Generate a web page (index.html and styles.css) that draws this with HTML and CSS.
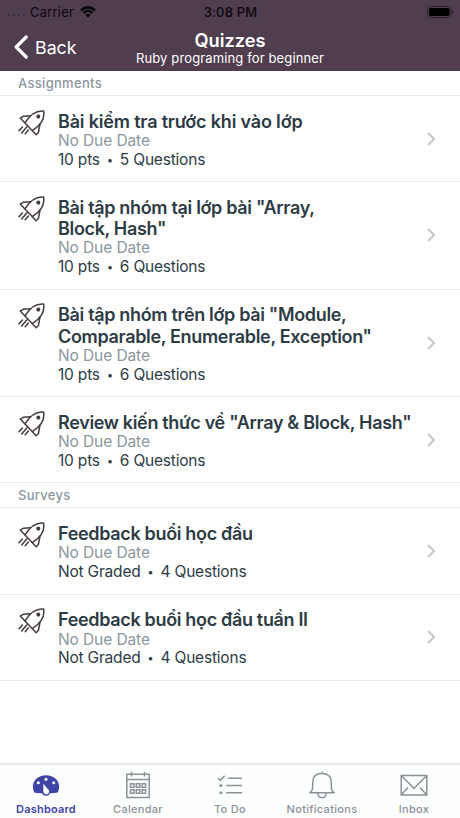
FILE: index.html
```html
<!DOCTYPE html>
<html lang="vi">
<head>
  <meta charset="UTF-8" />
  <title>Quizzes</title>
  <link rel="stylesheet" href="styles.css">
</head>
<body>
  <svg class="defs">
    <symbol id="rocket" viewBox="0 0 28 28">
      <path d="M7 12.8C11.5 5.5 17 .3 25.6 1.1C27.2 10 22.5 15.5 14.6 20.4" />
      <path d="M12.6 5.8L5.2 6.3L2.2 8.1L18.2 24.7L20.4 22.5L22 14.2M1 20.8L4.4 17M3.7 22.9L8.7 17M7.2 23.7L10.3 20" />
      <circle cx="20.3" cy="6.6" r="1.3" fill="currentColor" />
    </symbol>
    <symbol id="chevron" viewBox="0 0 10 16">
      <path d="M2 2L8 8L2 14" />
    </symbol>
  </svg>

  <header class="header">
    <div class="status">
      <div class="carrier">
        <span class="dots"><i></i><i></i><i></i><i></i></span>
        <span>Carrier</span>
        <svg class="wifi" viewBox="0 0 16 12">
          <path d="M1 4.3Q8-1.8 15 4.3M3.4 6.9Q8 3 12.6 6.9" fill="none" stroke="#000" stroke-width="2.2" />
          <path d="M5.3 8.7Q8 6.6 10.7 8.7L8 11.7Z" />
        </svg>
      </div>
      <div class="time">3:08 PM</div>
      <svg class="battery" viewBox="0 0 28 12">
        <rect x=".5" y=".5" width="23.5" height="11" rx="2.8" fill="none" stroke="#2c222d" />
        <rect x="2" y="2" width="20.5" height="8" rx="1.5" />
        <path d="M25.3 4.3Q27 6 25.3 7.7Z" />
      </svg>
    </div>
    <div class="navbar">
      <div class="back">
        <svg viewBox="0 0 14 24"><path d="M12.2 2L2.2 12L12.2 22" /></svg>
        <span>Back</span>
      </div>
      <div class="heading">
        <h1>Quizzes</h1>
        <p>Ruby programing for beginner</p>
      </div>
    </div>
  </header>

  <main class="list">
    <h2 class="section">Assignments</h2>
    <div class="row">
      <svg class="rocket"><use href="#rocket" /></svg>
      <div class="info">
        <h3 class="loose">Bài kiểm tra trước khi vào lớp</h3>
        <p class="due">No Due Date</p>
        <p class="meta">10 pts<b>•</b>5 Questions</p>
      </div>
      <svg class="chevron"><use href="#chevron" /></svg>
    </div>
    <div class="row">
      <svg class="rocket"><use href="#rocket" /></svg>
      <div class="info">
        <h3>Bài tập nhóm tại lớp bài "Array,<br>Block, Hash"</h3>
        <p class="due">No Due Date</p>
        <p class="meta">10 pts<b>•</b>6 Questions</p>
      </div>
      <svg class="chevron"><use href="#chevron" /></svg>
    </div>
    <div class="row">
      <svg class="rocket"><use href="#rocket" /></svg>
      <div class="info">
        <h3>Bài tập nhóm trên lớp bài "Module,<br>Comparable, Enumerable, Exception"</h3>
        <p class="due">No Due Date</p>
        <p class="meta">10 pts<b>•</b>6 Questions</p>
      </div>
      <svg class="chevron"><use href="#chevron" /></svg>
    </div>
    <div class="row">
      <svg class="rocket"><use href="#rocket" /></svg>
      <div class="info">
        <h3>Review kiến thức về "Array &amp; Block, Hash"</h3>
        <p class="due">No Due Date</p>
        <p class="meta">10 pts<b>•</b>6 Questions</p>
      </div>
      <svg class="chevron"><use href="#chevron" /></svg>
    </div>
    <h2 class="section">Surveys</h2>
    <div class="row">
      <svg class="rocket"><use href="#rocket" /></svg>
      <div class="info">
        <h3>Feedback buổi học đầu</h3>
        <p class="due">No Due Date</p>
        <p class="meta">Not Graded<b>•</b>4 Questions</p>
      </div>
      <svg class="chevron"><use href="#chevron" /></svg>
    </div>
    <div class="row">
      <svg class="rocket"><use href="#rocket" /></svg>
      <div class="info">
        <h3>Feedback buổi học đầu tuần II</h3>
        <p class="due">No Due Date</p>
        <p class="meta">Not Graded<b>•</b>4 Questions</p>
      </div>
      <svg class="chevron"><use href="#chevron" /></svg>
    </div>
  </main>

  <nav class="tabs">
    <div class="tab active">
      <svg viewBox="0 0 28 28">
        <path d="M2.2 21.4C-2 12.5 4 4.2 14 4.2S30 12.5 25.8 21.4Q23 22.3 18.2 22.2A4.5 4.5 0 0 1 10 22.2Q5 22.3 2.2 21.4Z" fill="currentColor" stroke="none" />
        <path d="M11.4 12.8L17 19.5Q17.5 23 14.8 23.2Q11.6 23.3 11.3 20Z" fill="#fff" stroke="none" />
        <g fill="#fff" stroke="none">
          <circle cx="6.3" cy="11.7" r="1.5" />
          <circle cx="14" cy="8.3" r="1.5" />
          <circle cx="21.7" cy="11.7" r="1.5" />
        </g>
      </svg>
      <span>Dashboard</span>
    </div>
    <div class="tab">
      <svg viewBox="0 0 28 28">
        <path d="M2.8 3.2H25.2V26.5H2.8ZM2.8 8.5H25.2M7.5 .8V5.5M20.5 .8V5.5" />
        <path d="M6.5 12.8h3.5v3.5h-3.5zM12.3 12.8h3.5v3.5h-3.5zM18.1 12.8h3.5v3.5h-3.5zM6.5 18.8h3.5v3.5h-3.5zM12.3 18.8h3.5v3.5h-3.5zM18.1 18.8h3.5v3.5h-3.5z" />
      </svg>
      <span>Calendar</span>
    </div>
    <div class="tab">
      <svg viewBox="0 0 28 28">
        <path d="M2 7.2L4.3 9.5L8.6 4.7M12 7.3H26M10.2 14.5H26M10.2 21.7H26" />
        <g fill="currentColor" stroke="none">
          <circle cx="4.9" cy="14.5" r="1.5" />
          <circle cx="4.9" cy="21.7" r="1.5" />
        </g>
      </svg>
      <span>To Do</span>
    </div>
    <div class="tab">
      <svg viewBox="0 0 28 28">
        <path d="M1.3 21.8C5 20.5 4.7 17 4.7 11.5C4.7 5 9 2.5 14 2.5S23.3 5 23.3 11.5C23.3 17 23 20.5 26.7 21.8ZM14 .5V2.5M9.9 22C10 28.3 18 28.3 18.1 22" />
      </svg>
      <span>Notifications</span>
    </div>
    <div class="tab">
      <svg viewBox="0 0 28 28">
        <path d="M1.2 4.5H26.8V24H1.2ZM1.2 4.5L14 17.5L26.8 4.5M1.2 24L8 16.5M26.8 24L20 16.5" />
      </svg>
      <span>Inbox</span>
    </div>
  </nav>
</body>
</html>
```
FILE: styles.css
```css
* { box-sizing: border-box; }
body { margin: 0; height: 818px; display: flex; flex-direction: column; overflow: hidden; background: #fff; color: #2d3b45; font-family: Inter, "Liberation Sans", sans-serif; }
h1, h2, h3, p { margin: 0; }
svg { display: block; flex: none; fill: none; }
.defs { display: none; }

.header { height: 71px; background: #503e4f; color: #fff; }
.status { height: 23px; display: grid; grid-template-columns: 1fr auto 1fr; align-items: center; padding: 0 5px 0 8px; color: #0d080d; font-size: 13px; }
.carrier { display: flex; align-items: center; letter-spacing: .2px; }
.dots { display: flex; gap: 3px; width: 22px; padding-top: 7px; }
.dots i { width: 2px; height: 2px; border-radius: 50%; background: #33283a; }
.wifi { width: 16px; height: 12px; margin-left: 6px; fill: #000; }
.time { font-weight: 500; letter-spacing: .2px; margin-left: -2px; }
.battery { width: 28px; height: 12px; justify-self: end; fill: #000; }
.navbar { height: 48px; display: grid; grid-template-columns: 1fr auto 1fr; }
.back { display: flex; align-items: center; gap: 7px; height: 48px; padding-left: 14px; font-size: 17.8px; }
.back svg { width: 14px; height: 24px; stroke: #fff; stroke-width: 3.2; stroke-linecap: round; stroke-linejoin: round; }
.heading { text-align: center; padding-top: 6px; }
.heading h1 { font-size: 18.2px; line-height: 22px; font-weight: 600; }
.heading p { font-size: 13px; line-height: 14px; letter-spacing: .13px; }

.list { flex: 1; }
.section { height: 25px; padding-left: 18px; border-bottom: 1px solid #e8eaeb; color: #8b969e; font-size: 13px; line-height: 25px; font-weight: 500; letter-spacing: .3px; }
.section:not(:first-child) { line-height: 24px; }
.row { display: flex; align-items: center; min-height: 86.3px; padding: 14.6px 24.5px 11.8px 18px; border-bottom: 1px solid #e8eaeb; }
.rocket { width: 28px; height: 28px; align-self: flex-start; margin-top: -1px; color: #443b43; stroke: currentColor; stroke-width: 1.5; stroke-linejoin: round; stroke-linecap: round; }
.info { flex: 1; padding-left: 12px; white-space: nowrap; }
.info h3 { font-size: 18px; line-height: 21.3px; font-weight: 600; letter-spacing: -.33px; }
.info h3.loose { letter-spacing: -.18px; }
.info p { height: 18.7px; font-size: 15.5px; line-height: 18.7px; letter-spacing: -.1px; }
.info .due { color: #8b969e; }
.info .meta { letter-spacing: -.2px; }
.meta b { display: inline-block; width: 20px; text-align: center; font-size: 11px; line-height: 11px; font-weight: 600; vertical-align: 1px; }
.chevron { width: 10px; height: 16px; margin-bottom: 3px; stroke: #c7c7cc; stroke-width: 2.1; }

.tabs { height: 55px; display: grid; grid-template-columns: repeat(5, 1fr); border-top: 2px solid #e6e8ea; background: #fdfefe; color: #8b9196; }
.tab { display: flex; flex-direction: column; align-items: center; padding-top: 6px; }
.tab svg { width: 28px; height: 28px; stroke: currentColor; stroke-width: 1.5; }
.tab span { margin-top: 3px; font-size: 11px; line-height: 14px; font-weight: 500; letter-spacing: .3px; }
.active { color: #3f45a5; }
.tab.active span { font-weight: 600; letter-spacing: .2px; }
```
